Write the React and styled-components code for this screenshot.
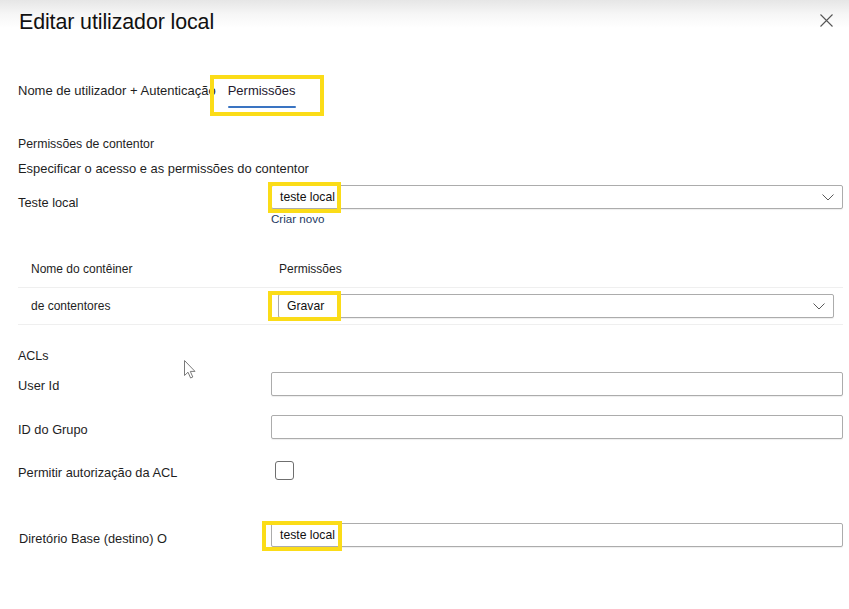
import React from "react";
import styled, { createGlobalStyle } from "styled-components";

const Global = createGlobalStyle`
  html, body { margin: 0; padding: 0; background: #fff; }
  body { font-family: "Liberation Sans", Arial, sans-serif; color: #1e1e1e; }
  * { box-sizing: border-box; }
`;

const Panel = styled.div`
  position: relative;
  width: 849px;
  height: 609px;
  padding: 0 6px 0 18px;
  background: linear-gradient(to bottom, #e6e6e6 0px, #f6f6f6 14px, #ffffff 28px, #ffffff 100%);
  overflow: hidden;
`;

const Header = styled.div`
  display: flex;
  align-items: center;
  justify-content: space-between;
  height: 44px;
`;

const Title = styled.h1`
  margin: 0 0 0 1px;
  font-size: 21.4px;
  font-weight: 400;
  color: #111;
  letter-spacing: -0.1px;
`;

const CloseButton = styled.button`
  display: flex;
  align-items: center;
  justify-content: center;
  width: 20px;
  height: 20px;
  margin: -4px 7px 0 0;
  padding: 0;
  border: none;
  background: transparent;
  color: #555;
`;

const Tabs = styled.div`
  display: flex;
  align-items: flex-start;
  margin-top: 39px;
`;

const Tab = styled.div`
  position: relative;
  display: flex;
  flex-direction: column;
  font-size: 13px;
  line-height: 16px;
  color: ${(p) => (p.$active ? "#24192e" : "#1e1e1e")};
  margin-left: ${(p) => (p.$active ? "12px" : "0")};
  padding-right: ${(p) => (p.$active ? "9px" : "0")};
  &::after {
    content: "";
    display: block;
    height: 2px;
    margin-top: 7px;
    background: ${(p) => (p.$active ? "#3a74c2" : "transparent")};
    border-radius: 1px;
  }
`;

const Highlight = styled.span`
  position: absolute;
  left: ${(p) => p.$left}px;
  top: ${(p) => p.$top}px;
  width: ${(p) => p.$w}px;
  height: ${(p) => p.$h}px;
  border: 4px solid #fbdc18;
  pointer-events: none;
`;

const SectionLabel = styled.div`
  font-size: ${(p) => p.$size || 12.3}px;
  line-height: 16px;
  margin-top: ${(p) => p.$mt}px;
`;

const Description = styled.div`
  font-size: 12.9px;
  line-height: 16px;
  margin-top: 9px;
`;

const FormRow = styled.div`
  display: grid;
  grid-template-columns: 253px 1fr;
  align-items: ${(p) => (p.$top ? "start" : "center")};
  margin-top: ${(p) => p.$mt}px;
`;

const Label = styled.label`
  font-size: 12.8px;
  line-height: 16px;
  padding-top: ${(p) => p.$pt || 0}px;
  padding-left: ${(p) => p.$pl || 0}px;
`;

const FieldColumn = styled.div`
  display: flex;
  flex-direction: column;
  align-items: flex-start;
`;

const Field = styled.div`
  position: relative;
  display: flex;
  align-items: center;
  justify-content: space-between;
  width: 100%;
  height: 24px;
  padding: 0 8px 0 8px;
  border: 1px solid #acacac;
  border-radius: 2px;
  box-shadow: 0 1px 1px rgba(0, 0, 0, 0.07);
  background: #fff;
  font-size: 12.2px;
  color: #111;
`;

const Link = styled.a`
  margin-top: 3px;
  font-size: 11.6px;
  line-height: 14px;
  color: #1d3a63;
  text-decoration: none;
`;

const Table = styled.div`
  margin-top: 24px;
  display: flex;
  flex-direction: column;
`;

const TableRow = styled.div`
  display: grid;
  grid-template-columns: 260px 1fr;
  align-items: center;
  height: ${(p) => p.$h}px;
  border-bottom: 1px solid #efefef;
  padding-right: 9px;
`;

const Cell = styled.div`
  font-size: 12px;
  line-height: 16px;
  padding-left: ${(p) => p.$pl || 0}px;
`;

const Checkbox = styled.span`
  display: block;
  width: 19px;
  height: 19px;
  margin-left: 4px;
  border: 1px solid #6f6f6f;
  border-radius: 3px;
  background: #fff;
`;

const Cursor = styled.svg`
  position: absolute;
  left: 184px;
  top: 360px;
`;

const Chevron = () => (
  <svg width="12" height="7" viewBox="0 0 12 7" fill="none">
    <path d="M0.5 0.5 L6 6 L11.5 0.5" stroke="#5a5a5a" strokeWidth="1" />
  </svg>
);

export default function App() {
  return (
    <>
      <Global />
      <Panel>
        <Header>
          <Title>Editar utilizador local</Title>
          <CloseButton aria-label="Fechar">
            <svg width="13" height="13" viewBox="0 0 13 13">
              <path d="M0.5 0.5 L12.5 12.5 M12.5 0.5 L0.5 12.5" stroke="#555" strokeWidth="1.1" />
            </svg>
          </CloseButton>
        </Header>

        <Tabs>
          <Tab>Nome de utilizador + Autenticação</Tab>
          <Tab $active>
            Permissões
            <Highlight $left={-18} $top={-8} $w={114} $h={41} />
          </Tab>
        </Tabs>

        <SectionLabel $mt={28}>Permissões de contentor</SectionLabel>
        <Description>Especificar o acesso e as permissões do contentor</Description>

        <FormRow $mt={8} $top>
          <Label $pt={10}>Teste local</Label>
          <FieldColumn>
            <Field>
              teste local
              <Chevron />
              <Highlight $left={-4} $top={-4} $w={73} $h={31} />
            </Field>
            <Link>Criar novo</Link>
          </FieldColumn>
        </FormRow>

        <Table>
          <TableRow $h={38}>
            <Cell $pl={13}>Nome do contêiner</Cell>
            <Cell $pl={1}>Permissões</Cell>
          </TableRow>
          <TableRow $h={37}>
            <Cell $pl={13}>de contentores</Cell>
            <Field>
              Gravar
              <Chevron />
              <Highlight $left={-11} $top={-4} $w={73} $h={30} />
            </Field>
          </TableRow>
        </Table>

        <SectionLabel $mt={23} $size={12.5}>ACLs</SectionLabel>

        <FormRow $mt={8}>
          <Label $pt={4}>User Id</Label>
          <Field />
        </FormRow>

        <FormRow $mt={19}>
          <Label $pt={5}>ID do Grupo</Label>
          <Field />
        </FormRow>

        <FormRow $mt={22} $top>
          <Label $pt={4}>Permitir autorização da ACL</Label>
          <Checkbox role="checkbox" aria-checked="false" />
        </FormRow>

        <FormRow $mt={42}>
          <Label $pt={7} $pl={1}>Diretório Base (destino) O</Label>
          <Field>
            teste local
            <Highlight $left={-10} $top={-3} $w={80} $h={30} />
          </Field>
        </FormRow>

        <Cursor width="14" height="19" viewBox="0 0 14 19">
          <path
            d="M0.5 0.5 L0.5 15.5 L4 12.2 L6.6 18 L8.8 17 L6.3 11.4 L11 11.4 Z"
            fill="#fff"
            stroke="#7a7a7a"
            strokeWidth="1"
            strokeLinejoin="round"
          />
        </Cursor>
      </Panel>
    </>
  );
}
